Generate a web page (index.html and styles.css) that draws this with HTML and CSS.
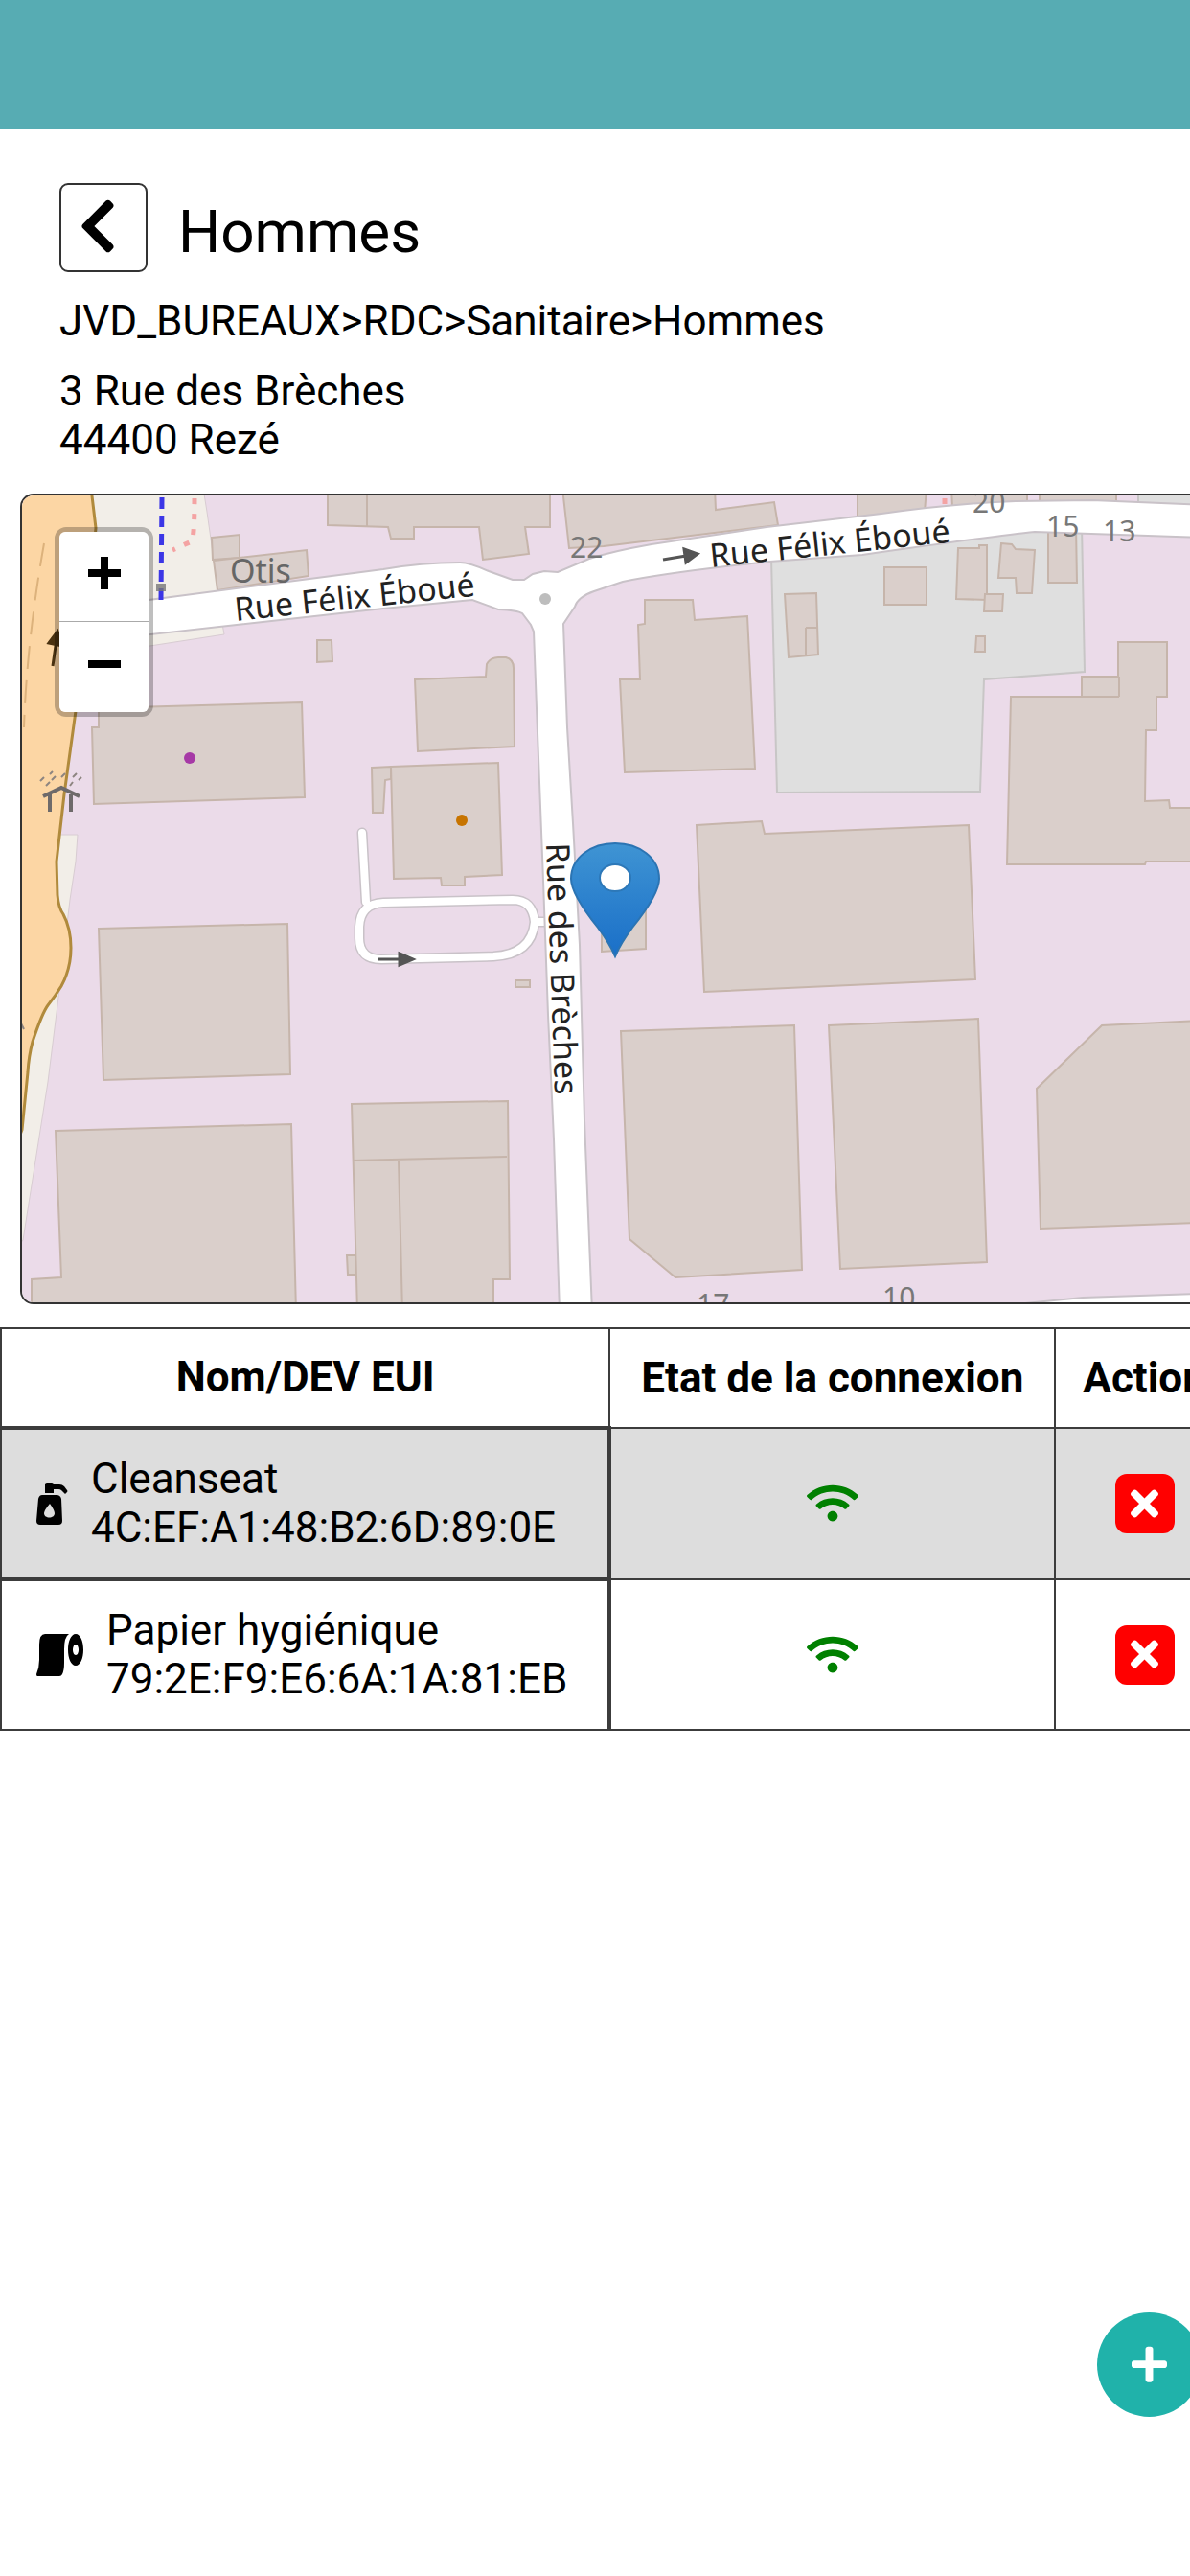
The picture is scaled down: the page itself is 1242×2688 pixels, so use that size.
FILE: index.html
```html
<!DOCTYPE html>
<html lang="fr">
<head>
    <meta charset="utf-8">
    <meta name="viewport" content="width=device-width, initial-scale=1">
    <title>Hommes</title>
    <link rel="stylesheet" href="styles.css">
</head>
<body>
    <header class="topbar"></header>

    <main>
        <section class="infos">
            <div class="title-row">
                <button type="button" class="back-btn" aria-label="Retour">
                    <svg viewBox="0 0 320 512"><path d="M34.52 239.03L228.87 44.69c9.37-9.37 24.57-9.37 33.94 0l22.67 22.67c9.36 9.36 9.37 24.52.04 33.9L131.49 256l154.02 154.75c9.34 9.38 9.32 24.54-.04 33.9l-22.67 22.67c-9.37 9.37-24.57 9.37-33.94 0L34.52 272.97c-9.37-9.37-9.37-24.57 0-33.94z"/></svg>
                </button>
                <h1>Hommes</h1>
            </div>
            <p class="path">JVD_BUREAUX&gt;RDC&gt;Sanitaire&gt;Hommes</p>
            <address>3 Rue des Brèches<br>44400 Rezé</address>
        </section>

        <section class="map">
            <svg class="map-canvas" viewBox="23 518 1219 842">
                <defs>
                    <linearGradient id="pin" x1="0" y1="0" x2="0" y2="1">
                        <stop offset="0" stop-color="#3f94d3"/>
                        <stop offset="1" stop-color="#1a6fc8"/>
                    </linearGradient>
                </defs>
                <rect class="ground" x="20" y="510" width="1230" height="860"/>

                <!-- verges -->
                <path class="verge" d="M90 510H212L216 535L228 620L150 630L90 640Z"/>
                <path class="verge" d="M150 663L232 652L234 663L150 676Z"/>
                <path class="verge" d="M60 872H81L79 900L73 940L60 1050L50 1130L24 1295L20 1300V1000Z"/>

                <!-- main road on the left -->
                <path class="main-road" d="M15 510H95L100 552L92 640L79 743L67 830L59 900L60 935Q61 948 66 955Q74 970 74 990Q74 1012 64 1030Q58 1040 50 1050Q44 1058 34 1088Q30 1103 29 1120L23 1180L15 1200Z"/>
                <path class="lane" d="M46 568Q28 670 25 760"/>
                <path class="arrow-dark" d="M55 696L59 668M51 672L60 660L65 675Z"/>

                <!-- residential plot -->
                <path class="plot" d="M805 583L811 828L1023 827L1027 710L1132 702L1129 550H900Z"/>

                <!-- buildings -->
                <g class="building">
                    <path d="M342 510V549L405 551L408 563H432V551H500L504 585L552 579L548 551H574V510ZM383 510V550"/>
                    <path d="M587 510L594 573L630 571L812 549L808 525L747 533L746 510Z"/>
                    <path d="M221 562L250 559V583L222 585Z"/>
                    <path d="M223 586L320 575L322 602L227 617Z"/>
                    <path d="M331 669H346L347 691L331 692Z"/>
                    <path d="M96 760H103V740L315 734L318 833L98 840Z"/>
                    <path d="M433 710L507 707L508 694Q512 687 520 687H528Q536 689 536 698L537 780L436 785Z"/>
                    <path d="M388 802L408 801V814L402 815L400 849H389Z"/>
                    <path d="M408 801L520 797L524 914L485 916V925H461L460 917L411 918Z"/>
                    <path d="M673 627H723L725 648L780 644L788 803L652 807L647 710H668L666 653L673 652Z"/>
                    <path d="M819 621L852 620L854 684L823 687ZM841 684V656M841 656H853"/>
                    <path d="M923 593H967V632H923Z"/>
                    <path d="M1000 573H1022V570H1030V627L998 626Z"/>
                    <path d="M1028 621H1047L1046 639H1027Z"/>
                    <path d="M1045 568L1056 569L1060 574L1080 575L1077 620H1061L1060 604H1042Z"/>
                    <path d="M1094 550L1123 550L1124 609H1094Z"/>
                    <path d="M1019 665H1028V681H1018Z"/>
                    <path d="M1055 728H1129V707H1167V671H1218V728H1207V763H1196L1195 837L1220 836L1221 844H1250V900H1196L1195 903H1051ZM1129 728H1168M1168 728V707"/>
                    <path d="M895 510H967L965 535L895 545Z"/>
                    <path d="M993 510H1072V530H994Z"/>
                    <path d="M1085 510H1165V530H1085Z"/>
                    <path d="M727 862L795 858L798 871L1011 862L1018 1023L735 1036Z"/>
                    <path d="M628 950H674V991L628 994Z"/>
                    <path d="M648 1077L829 1071L837 1326L705 1334L657 1294Z"/>
                    <path d="M865 1071L1021 1064L1030 1318L877 1325Z"/>
                    <path d="M1250 1066L1150 1071L1082 1137L1086 1283L1250 1277Z"/>
                    <path d="M103 970L300 965L303 1122L108 1128Z"/>
                    <path d="M58 1181L304 1174L309 1370H33V1336L64 1334Z"/>
                    <path d="M367 1153L530 1150L532 1336H515V1370H373ZM368 1212L529 1208M416 1212L420 1370"/>
                    <path d="M362 1311H371V1331H363Z"/>
                    <path d="M538 1024H553V1031H538Z"/>
                </g>
                <path class="plot" d="M1188 510H1250V530H1188Z"/>

                <!-- service road loop -->
                <path class="loop-case" d="M378 870L382 942M568 963H558Q556 940 535 940L400 943Q376 944 375 968V980Q375 1002 398 1002L515 999Q555 997 558 963"/>
                <path class="loop" d="M378 870L382 942M568 963H558Q556 940 535 940L400 943Q376 944 375 968V980Q375 1002 398 1002L515 999Q555 997 558 963"/>

                <!-- streets -->
                <path class="street" d="M140 629L400 595Q440 588 480 588Q490 588 510 597L535 606L547 606L556 600L568 597L582 598L615 584Q640 576 680 569L800 551L920 537Q1000 526 1060 524L1140 523L1260 528V562L1080 556Q1040 560 900 580L803 587Q700 598 650 608L620 618Q603 624 600 634L588 652L592 760L598 860L605 987L610 1170L618 1370H584L578 1190L572 1060L567 920L560 740L557 660L554 653L545 641Q540 638 520 637L493 627L400 636L247 653L140 665Z"/>
                <path class="street" d="M1020 1366L1130 1355L1250 1351V1370Z"/>
                <circle cx="569" cy="626" r="6" fill="#bdbdbd"/>

                <!-- paths -->
                <path class="cycleway" d="M169 520L168 627"/>
                <path class="footway" d="M203 521Q203 560 200 566L180 575"/>
                <rect x="163" y="610" width="10" height="8" fill="#777" opacity=".8"/>
                <path class="footway" d="M986 521V535"/>

                <path class="arrow" d="M692 585L716 581M714 574L728 579L716 588Z"/>
                <path class="arrow" d="M394 1002H418M417 996L431 1002L417 1008Z"/>

                <!-- shelter -->
                <path class="shelter" d="M45 832L64 823L83 832M52 830V848M74 830V848"/>
                <path class="rain" d="M42 816L46 812M48 821L52 817M54 815L58 811M64 812L68 808M73 821L76 817M76 812L80 808M82 815L85 812M52 809L55 806M22 1069L25 1075"/>

                <circle cx="198" cy="792" r="6" fill="#a639a6"/>
                <circle cx="482" cy="857" r="6" fill="#c77400"/>

                <g class="numbers">
                    <text x="595" y="583">22</text>
                    <text x="1015" y="536">20</text>
                    <text x="1092" y="561">15</text>
                    <text x="1151" y="566">13</text>
                    <text x="921" y="1366">10</text>
                    <text x="727" y="1373">17</text>
                </g>
                <text class="place" x="240" y="609">Otis</text>
                <g class="street-name">
                    <text transform="translate(246 649) rotate(-6)">Rue Félix Éboué</text>
                    <text transform="translate(742 593) rotate(-6)">Rue Félix Éboué</text>
                    <text transform="translate(570 881) rotate(88)">Rue des Brèches</text>
                </g>

                <path class="pin" d="M642 999Q636 985 624 969Q596 934 596 918C596 896 617 881 642 881S688 896 688 918Q688 934 660 969Q648 985 642 999Z"/>
                <ellipse cx="642" cy="917" rx="16" ry="14" fill="#fff" stroke="#2d78b8" stroke-width="2"/>
            </svg>
            <div class="zoom">
                <button type="button" aria-label="Zoom avant"><svg viewBox="0 0 34 34"><path d="M0 17H34M17 0V34"/></svg></button>
                <button type="button" aria-label="Zoom arrière"><svg viewBox="0 0 34 34"><path d="M0 17H34"/></svg></button>
            </div>
        </section>

        <div class="table-wrap">
            <table>
                <thead>
                    <tr>
                        <th>Nom/DEV EUI</th>
                        <th>Etat de la connexion</th>
                        <th>Action</th>
                    </tr>
                </thead>
                <tbody>
                    <tr>
                        <td class="name">
                            <div class="device">
                                <svg class="soap" viewBox="0 0 33 44"><path fill-rule="evenodd" d="M9 2Q9 0 11 0H16Q18 0 18 2H24Q27 2 29 4L32 8Q33 9 32 10L30 12L26 8Q25 7 23 7H18V11H9ZM6 13H21Q25 13 26 17L27 40Q27 44 23 44H4Q0 44 0 40L2 17Q3 13 6 13ZM14 22Q8 29 8 32C8 38 19 38 19 32Q19 29 14 22Z"/></svg>
                                <span>Cleanseat<br>4C:EF:A1:48:B2:6D:89:0E</span>
                            </div>
                        </td>
                        <td><svg class="wifi" role="img" aria-label="Connecté" viewBox="0 0 640 512"><path d="M634.91 154.88C457.74-8.99 182.19-8.93 5.09 154.88c-6.66 6.16-6.79 16.59-.35 22.98l34.24 33.97c6.14 6.1 16.02 6.23 22.4.38 145.92-133.68 371.3-133.71 517.25 0 6.38 5.85 16.26 5.71 22.4-.38l34.24-33.97c6.43-6.39 6.3-16.82-.36-22.98zM320 352c-35.35 0-64 28.65-64 64s28.65 64 64 64 64-28.65 64-64-28.65-64-64-64zm202.67-83.59c-115.26-101.93-290.21-101.82-405.34 0-6.9 6.1-7.12 16.69-.57 23.15l34.44 33.99c6 5.92 15.66 6.32 22.05.8 83.95-72.57 209.74-72.41 293.49 0 6.39 5.52 16.05 5.13 22.05-.8l34.44-33.99c6.56-6.46 6.33-17.06-.56-23.15z"/></svg></td>
                        <td>
                            <button type="button" class="delete-btn" aria-label="Supprimer Cleanseat"><svg viewBox="0 0 352 512"><path d="M242.72 256l100.07-100.07c12.28-12.28 12.28-32.19 0-44.48l-22.24-22.24c-12.28-12.28-32.19-12.28-44.48 0L176 189.28 75.93 89.21c-12.28-12.28-32.19-12.28-44.48 0L9.21 111.45c-12.28 12.28-12.28 32.19 0 44.48L109.28 256 9.21 356.07c-12.28 12.28-12.28 32.19 0 44.48l22.24 22.24c12.28 12.28 32.2 12.28 44.48 0L176 322.72l100.07 100.07c12.28 12.28 32.2 12.28 44.48 0l22.24-22.24c12.28-12.28 12.28-32.19 0-44.48L242.72 256z"/></svg></button>
                        </td>
                    </tr>
                    <tr>
                        <td class="name">
                            <div class="device">
                                <svg class="paper" viewBox="0 0 49 44"><path fill-rule="evenodd" d="M9 0H34Q29 3 29 16V30Q29 38 27 42Q26 44 24 44H1Q0 44 0 42Q3 35 3 27V11Q3 0 9 0ZM41 0C46 0 49 8 49 16.500S46 33 41 33S33 25 33 16.500S36 0 41 0ZM41 11C39 11 38 14 38 16.500S39 22 41 22S44 19 44 16.500S43 11 41 11Z"/></svg>
                                <span>Papier hygiénique<br>79:2E:F9:E6:6A:1A:81:EB</span>
                            </div>
                        </td>
                        <td><svg class="wifi" role="img" aria-label="Connecté" viewBox="0 0 640 512"><path d="M634.91 154.88C457.74-8.99 182.19-8.93 5.09 154.88c-6.66 6.16-6.79 16.59-.35 22.98l34.24 33.97c6.14 6.1 16.02 6.23 22.4.38 145.92-133.68 371.3-133.71 517.25 0 6.38 5.85 16.26 5.71 22.4-.38l34.24-33.97c6.43-6.39 6.3-16.82-.36-22.98zM320 352c-35.35 0-64 28.65-64 64s28.65 64 64 64 64-28.65 64-64-28.65-64-64-64zm202.67-83.59c-115.26-101.93-290.21-101.82-405.34 0-6.9 6.1-7.12 16.69-.57 23.15l34.44 33.99c6 5.92 15.66 6.32 22.05.8 83.95-72.57 209.74-72.41 293.49 0 6.39 5.52 16.05 5.13 22.05-.8l34.44-33.99c6.56-6.46 6.33-17.06-.56-23.15z"/></svg></td>
                        <td>
                            <button type="button" class="delete-btn" aria-label="Supprimer Papier hygiénique"><svg viewBox="0 0 352 512"><path d="M242.72 256l100.07-100.07c12.28-12.28 12.28-32.19 0-44.48l-22.24-22.24c-12.28-12.28-32.19-12.28-44.48 0L176 189.28 75.93 89.21c-12.28-12.28-32.19-12.28-44.48 0L9.21 111.45c-12.28 12.28-12.28 32.19 0 44.48L109.28 256 9.21 356.07c-12.28 12.28-12.28 32.19 0 44.48l22.24 22.24c12.28 12.28 32.2 12.28 44.48 0L176 322.72l100.07 100.07c12.28 12.28 32.2 12.28 44.48 0l22.24-22.24c12.28-12.28 12.28-32.19 0-44.48L242.72 256z"/></svg></button>
                        </td>
                    </tr>
                </tbody>
            </table>
        </div>
    </main>

    <button type="button" class="add-btn" aria-label="Ajouter">
        <svg viewBox="0 0 448 512"><path d="M416 208H272V64c0-17.67-14.33-32-32-32h-32c-17.67 0-32 14.33-32 32v144H32c-17.67 0-32 14.33-32 32v32c0 17.67 14.33 32 32 32h144v144c0 17.67 14.33 32 32 32h32c17.67 0 32-14.33 32-32V304h144c17.67 0 32-14.33 32-32v-32c0-17.67-14.33-32-32-32z"/></svg>
    </button>
</body>
</html>
```
FILE: styles.css
```css
* {
    box-sizing: border-box;
}

body {
    margin: 0;
    font-family: Roboto, sans-serif;
    font-size: 44px;
    line-height: 51px;
    color: #000;
    background-color: #fff;
    overflow-x: hidden;
}

button {
    padding: 0;
    border: none;
    cursor: pointer;
}

svg {
    display: block;
}

.topbar {
    height: 135px;
    background-color: #57acb3;
}

/* title and address */
.infos {
    padding: 56px 62px 30px;
}

.title-row {
    display: flex;
    align-items: center;
    gap: 32px;
}

.back-btn {
    width: 92px;
    height: 93px;
    padding: 0 0 4px 18px;
    border: 2px solid #333;
    border-radius: 9px;
    background-color: #fff;
}

.back-btn svg {
    height: 64px;
}

h1 {
    margin: 0;
    padding-top: 8px;
    font-size: 62px;
    font-weight: 400;
    line-height: 72px;
}

.path {
    margin: 26px 0 22px;
}

address {
    font-style: normal;
}

/* map */
.map {
    position: relative;
    margin-left: 21px;
    border: 2px solid #333;
    border-right: none;
    border-radius: 14px 0 0 14px;
    overflow: hidden;
}

.map-canvas {
    width: 100%;
    height: auto;
}

.ground {
    fill: #ebdbe9;
}

.verge {
    fill: #f2eee8;
    stroke: #d8ccd2;
}

.main-road {
    fill: #fcd6a4;
    stroke: #b08a3c;
    stroke-width: 3;
}

.lane {
    fill: none;
    stroke: #dcb27c;
    stroke-width: 2;
    stroke-dasharray: 24 12;
}

.plot {
    fill: #dfdfdf;
    stroke: #c8c6c6;
    stroke-width: 2;
}

.building {
    fill: #dacfcb;
    stroke: #c6b5ab;
    stroke-width: 2;
}

.street {
    fill: #fff;
    stroke: #c9c2c8;
    stroke-width: 2;
}

.loop-case,
.loop {
    fill: none;
    stroke: #c9c2c8;
    stroke-width: 11;
    stroke-linecap: round;
}

.loop {
    stroke: #fff;
    stroke-width: 8;
}

.cycleway {
    stroke: #3c36e6;
    stroke-width: 5;
    stroke-dasharray: 12 7;
}

.footway {
    fill: none;
    stroke: #f4a3a3;
    stroke-width: 5;
    stroke-dasharray: 6 10;
}

.arrow {
    fill: #555;
    stroke: #555;
    stroke-width: 3;
}

.arrow-dark {
    fill: #4a3210;
    stroke: #4a3210;
    stroke-width: 3;
}

.shelter {
    fill: none;
    stroke: #6e6a6a;
    stroke-width: 4;
}

.rain {
    stroke: #8d8580;
    stroke-width: 2;
}

.numbers,
.place {
    font-family: "Noto Sans", sans-serif;
    font-size: 30px;
    fill: #777;
}

.place {
    font-size: 34px;
    fill: #666;
}

.street-name {
    font-family: "Noto Sans", sans-serif;
    font-size: 34px;
    fill: #222;
}

.pin {
    fill: url(#pin);
    stroke: #2b74b3;
    stroke-width: 2;
}

.zoom {
    position: absolute;
    top: 33px;
    left: 34px;
    display: flex;
    flex-direction: column;
    border: 5px solid rgba(0, 0, 0, 0.25);
    border-radius: 12px;
    background-clip: padding-box;
}

.zoom button {
    display: flex;
    align-items: center;
    justify-content: center;
    width: 93px;
    height: 94px;
    background-color: #fff;
}

.zoom button:first-child {
    padding-bottom: 8px;
    border-bottom: 1px solid #aaa;
    border-radius: 6px 6px 0 0;
}

.zoom button:last-child {
    padding-bottom: 6px;
    border-radius: 0 0 6px 6px;
}

.zoom svg {
    width: 34px;
    stroke: #000;
    stroke-width: 8;
}

/* devices */
.table-wrap {
    margin-top: 24px;
    overflow: hidden;
}

table {
    border-collapse: collapse;
}

th,
td {
    border: 2px solid #3c3c3c;
    text-align: center;
    white-space: nowrap;
}

th {
    padding: 25px 32px;
    font-weight: 700;
}

th:last-child {
    padding: 25px 28px;
}

td {
    padding: 26px 32px;
}

.name {
    padding: 26px 42px 26px 36px;
    border-width: 4px 4px 4px 2px;
    text-align: left;
}

tbody tr:last-child .name {
    border-bottom-width: 2px;
}

tbody tr:nth-child(odd) {
    background-color: #ddd;
}

.device {
    display: flex;
    align-items: center;
    gap: 24px;
}

.device svg {
    flex: none;
    height: 44px;
}

.soap {
    width: 33px;
}

.paper {
    width: 49px;
}

.wifi {
    width: 54px;
    margin: 0 auto;
    fill: green;
}

.delete-btn {
    display: flex;
    align-items: center;
    justify-content: center;
    width: 62px;
    height: 62px;
    margin: 0 auto;
    border-radius: 12px;
    background-color: red;
}

.delete-btn svg {
    width: 29px;
    fill: #fff;
}

.add-btn {
    position: fixed;
    right: -12px;
    bottom: 166px;
    display: flex;
    align-items: center;
    justify-content: center;
    width: 109px;
    height: 109px;
    border-radius: 50%;
    background-color: lightseagreen;
}

.add-btn svg {
    width: 37px;
    fill: #fff;
}
```
